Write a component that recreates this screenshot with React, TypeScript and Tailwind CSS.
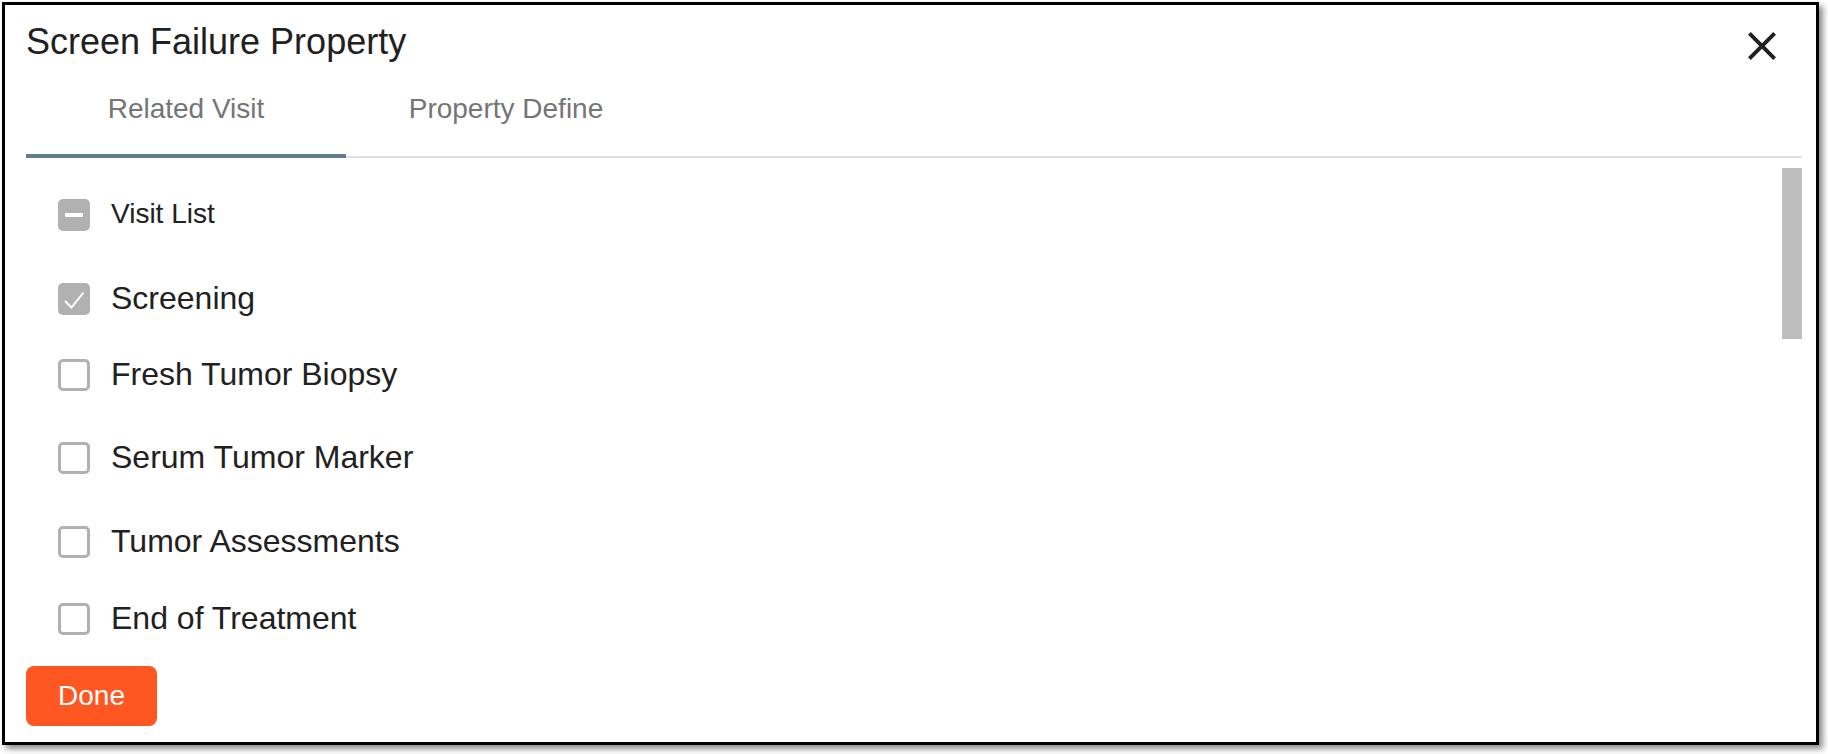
import React, { useState } from "react";

type VisitItem = {
    label: string;
    checked: boolean;
    gap: string;
};

const visits: VisitItem[] = [
    { label: "Screening", checked: true, gap: "mt-[52px]" },
    { label: "Fresh Tumor Biopsy", checked: false, gap: "mt-[44px]" },
    { label: "Serum Tumor Marker", checked: false, gap: "mt-[51px]" },
    { label: "Tumor Assessments", checked: false, gap: "mt-[52px]" },
    { label: "End of Treatment", checked: false, gap: "mt-[45px]" },
];

const CheckBox: React.FunctionComponent<{ state: "on" | "off" | "some" }> = ({ state }) => {
    if (state === "off") {
        return <span className="w-[32px] h-[32px] shrink-0 rounded-[5px] border-[3px] border-[#b1b1b1] bg-white" />;
    }
    return (
        <span className="w-[32px] h-[32px] shrink-0 rounded-[5px] bg-[#b1b1b1] flex items-center justify-center">
            <svg width="32" height="32" viewBox="0 0 32 32">
                {state === "some"
                    ? <rect x="7" y="14" width="18" height="4" rx="1" fill="#fff" />
                    : <polyline points="7,18 13.5,24.5 25.5,9.5" fill="none" stroke="#fff" strokeWidth="2" />}
            </svg>
        </span>
    );
};

export default function App() {
    const [tab, setTab] = useState(0);

    return (
        <div className="w-[1828px] h-[754px] bg-white pl-[2px] pt-[2px]" style={{ fontFamily: '"Liberation Sans", Arial, Helvetica, sans-serif' }}>
            <div className="w-[1817px] h-[743px] border-[3px] border-black bg-white shadow-[4px_4px_6px_rgba(0,0,0,0.45)] flex flex-col pl-[21px] pr-[14px]">
                <div className="h-[57px] flex justify-between items-start shrink-0">
                    <h1 className="pt-[16px] text-[36px] leading-[41px] text-[#212121]">Screen Failure Property</h1>
                    <button className="mt-[17px] mr-[16px]">
                        <svg width="48" height="48" viewBox="0 0 24 24">
                            <path d="M19 6.41L17.59 5 12 10.59 6.41 5 5 6.41 10.59 12 5 17.59 6.41 19 12 13.41 17.59 19 19 17.59 13.41 12z" fill="#212121" />
                        </svg>
                    </button>
                </div>

                <div className="flex border-b-2 border-[#e0e0e0] shrink-0">
                    {["Related Visit", "Property Define"].map((name, index) =>
                        <button
                            key={name}
                            onClick={() => setTab(index)}
                            className={"w-[320px] h-[96px] -mb-[2px] pt-[1px] flex items-center justify-center text-[28px] leading-[32px] text-[#757575] border-b-4 " + (tab === index ? "border-[#607d8b]" : "border-transparent")}
                        >
                            {name}
                        </button>
                    )}
                </div>

                <div className="h-[498px] flex shrink-0">
                    <div className="flex-1 flex flex-col pl-[32px]">
                        <div className="mt-[41px] h-[32px] flex items-center gap-[21px]">
                            <CheckBox state="some" />
                            <span className="pb-[2px] text-[28px] leading-[32px] text-[#212121]">Visit List</span>
                        </div>
                        {visits.map((visit) =>
                            <div key={visit.label} className={visit.gap + " h-[32px] flex items-center gap-[21px]"}>
                                <CheckBox state={visit.checked ? "on" : "off"} />
                                <span className="pb-[3px] text-[32px] leading-[36px] text-[#212121] whitespace-nowrap">{visit.label}</span>
                            </div>
                        )}
                    </div>
                    <div className="w-[20px]">
                        <div className="mt-[10px] h-[171px] bg-[#bdbdbd]" />
                    </div>
                </div>

                <button className="mt-[10px] w-[131px] h-[60px] rounded-[8px] bg-[#ff5722] text-white text-[28px] leading-[32px] shrink-0 flex items-center justify-center">
                    Done
                </button>
            </div>
        </div>
    );
}
